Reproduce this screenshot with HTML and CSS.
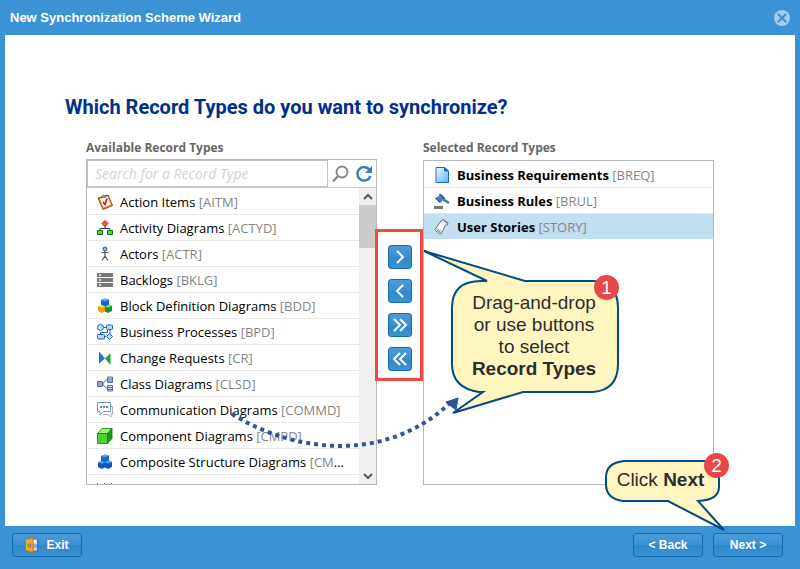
FILE: index.html
```html
<!DOCTYPE html>
<html lang="en">
  <head>
    <meta charset="UTF-8" />
    <meta name="viewport" content="width=device-width, initial-scale=1.0" />
    <title>New Synchronization Scheme Wizard</title>
    <link rel="stylesheet" href="styles.css">
  </head>
  <body>
    <div class="window">
      <header class="titlebar">
        <h1>New Synchronization Scheme Wizard</h1>
        <button class="close" aria-label="Close">
          <svg width="16" height="16" viewBox="0 0 16 16">
            <circle cx="8" cy="8" r="8" fill="#a3cbeb" />
            <path d="M4.5 4.5l7 7M11.5 4.5l-7 7" stroke="#3b92d4" stroke-width="2.2" stroke-linecap="round" />
          </svg>
        </button>
      </header>

      <main class="content">
        <h2>Which Record Types do you want to synchronize?</h2>
        <div class="picker">
          <section class="column">
            <h3>Available Record Types</h3>
            <div class="box">
              <div class="search">
                <input type="text" id="search" aria-label="Search for a Record Type" placeholder="Search for a Record Type" />
                <button class="tool" aria-label="Search">
                  <svg width="18" height="18" viewBox="0 0 18 18" fill="none" stroke="#858585">
                    <circle cx="11" cy="7" r="5.5" stroke-width="1.8" />
                    <path d="M7 11l-5 5.5" stroke-width="2.2" />
                  </svg>
                </button>
                <button class="tool" aria-label="Refresh">
                  <svg width="18" height="18" viewBox="0 0 18 18">
                    <path d="M15 5.5A6.7 6.7 0 1 0 15.5 11" fill="none" stroke="#3c7ab8" stroke-width="2.5" />
                    <path d="M17 1v7h-7z" fill="#3c7ab8" />
                  </svg>
                </button>
              </div>
              <div class="scroll">
                <ul class="list">
                  <li>
                    <svg class="icon" viewBox="0 0 16 16">
                      <path d="M1 4l10-3 4.5 10.5L6 15.5z" fill="#e88b1c" stroke="#8d4b12" />
                      <path d="M3 5l7.5-2.5 3.3 8L6.5 13.5z" fill="#fff" />
                      <path d="M4 3.5L6 1l3 1-.5 1.500z" fill="#aaa" stroke="#555" stroke-width=".6" />
                      <path d="M6 8l2 2.5L10 4.5" fill="none" stroke="#d4151c" stroke-width="1.7" />
                    </svg>
                    Action Items <span>[AITM]</span>
                  </li>
                  <li>
                    <svg class="icon" viewBox="0 0 16 16">
                      <path d="M8 5v4M3 11V8.5h10V11" fill="none" stroke="#2c3e63" />
                      <path d="M8 .5L11 3.5 8 6.5 5 3.5z" fill="#ff5a45" stroke="#c30d0d" />
                      <path d="M.5 10.5h5v4h-5zM10.5 10.5h5v4h-5z" fill="#4ede4b" stroke="#106d16" />
                    </svg>
                    Activity Diagrams <span>[ACTYD]</span>
                  </li>
                  <li>
                    <svg class="icon" viewBox="0 0 16 16" fill="none" stroke="#555">
                      <path d="M4.5 6.5h7M8 5v5l-3 4.5M8 10l3 4.5" stroke-width="1.2" />
                      <circle cx="8" cy="3" r="2" fill="#8bbcf0" stroke="#2f568c" />
                    </svg>
                    Actors <span>[ACTR]</span>
                  </li>
                  <li>
                    <svg class="icon" viewBox="0 0 16 16">
                      <path d="M0 1h16v4H0zM0 6h16v4H0zM0 11h16v4H0z" fill="#777" />
                      <path d="M2 3h2M2 8h2M2 13h2" stroke="#fff" stroke-width="1.5" />
                    </svg>
                    Backlogs <span>[BKLG]</span>
                  </li>
                  <li>
                    <svg class="icon" viewBox="0 0 16 16">
                      <path d="M4 2l4-1.5 4 1v5.500l-4 2-4-2z" fill="#1b68c9" />
                      <path d="M4 2l4-1.5 4 1-4 1.5z" fill="#65b5fa" />
                      <path d="M1 8.5l3-1.500 4 1.500v5l-3 1.500-4-2z" fill="#e4a400" />
                      <path d="M1 8.5l3-1.500 4 1.500-3 1z" fill="#ffe653" />
                      <path d="M8 8.5l4-2 3 1.500v5l-4 2-3-1.500z" fill="#179126" />
                      <path d="M8 8.5l4-2 3 1.500-4 1.500z" fill="#74e66b" />
                    </svg>
                    Block Definition Diagrams <span>[BDD]</span>
                  </li>
                  <li>
                    <svg class="icon" viewBox="0 0 16 16" fill="#b9dcfa" stroke="#1d63b8">
                      <path d="M6 3.5h4M13 5v5M7 12.5h2M3.5 10V8.5h7V6" fill="none" />
                      <circle cx="3.5" cy="3.5" r="3" />
                      <rect x="9.5" y="1" width="6" height="4.5" rx="1" />
                      <rect x=".5" y="10.5" width="7" height="4.5" rx="1" />
                      <path d="M12.5 9.5l3 3-3 3-3-3z" />
                    </svg>
                    Business Processes <span>[BPD]</span>
                  </li>
                  <li>
                    <svg class="icon" viewBox="0 0 16 16">
                      <path d="M2 1.5l6 7-6 5z" fill="#1673ce" />
                      <path d="M13.5 3v12L8 8.5z" fill="#1fa536" />
                    </svg>
                    Change Requests <span>[CR]</span>
                  </li>
                  <li>
                    <svg class="icon" viewBox="0 0 16 16" fill="#d5e2f3" stroke="#526f9f">
                      <path d="M5 8l5.5-5M5 8l5.5 5M5 8h2" fill="none" />
                      <path d="M.5 5.5h5v5h-5zM10.5 1h5v5.5h-5zM10.5 9.5h5V15h-5z" />
                      <path d="M1 7h4M11 3h4M11 5h4M11 11.5h4M11 13.5h4M1 9h4" />
                    </svg>
                    Class Diagrams <span>[CLSD]</span>
                  </li>
                  <li>
                    <svg class="icon" viewBox="0 0 16 16" fill="#fff">
                      <path d="M14 4.5h1.500v8H14v2.500l-3-2.500H6" stroke="#a5acb5" />
                      <path d="M.5.5h13v9H6.5L3 13V9.5H.5z" stroke="#6b9bc9" />
                      <path d="M3 5h2M6 5h2M9 5h2" stroke="#1f67aa" stroke-width="1.5" />
                    </svg>
                    Communication Diagrams <span>[COMMD]</span>
                  </li>
                  <li>
                    <svg class="icon" viewBox="0 0 16 16" stroke="#187b13" stroke-width=".8">
                      <path d="M.5 5.5h10v10H.5z" fill="#4fd036" />
                      <path d="M.5 5.5l4.500-5h10l-4.500 5z" fill="#9bf17c" />
                      <path d="M10.5 5.5l4.500-5v10l-4.500 5z" fill="#219a19" />
                    </svg>
                    Component Diagrams <span>[CMPD]</span>
                  </li>
                  <li>
                    <svg class="icon" viewBox="0 0 16 16">
                      <path d="M4 2l4-1.5 4 1v5.500l-4 2-4-2z" fill="#1d68cd" />
                      <path d="M1 8.5l3-1.500 4 1.500v5l-3 1.500-4-2zM8 8.5l4-2 3 1.500v5l-4 2-3-1.500z" fill="#0c56bb" />
                      <path d="M4 2l4-1.5 4 1-4 1.5zM1 8.5l3-1.500 4 1.500-3 1zM8 8.5l4-2 3 1.500-4 1.500z" fill="#58aaf7" />
                    </svg>
                    Composite Structure Diagrams <span>[CMSD]</span>
                  </li>
                  <li>
                    <svg class="icon" viewBox="0 0 16 16">
                      <path d="M0 3.5h1M7 3.5h1M14 3.5h1" stroke="#2c5f73" />
                    </svg>
                  </li>
                </ul>
                <div class="scrollbar">
                  <button aria-label="Scroll up">
                    <svg width="10" height="8" viewBox="0 0 10 8"><path d="M1 6l4-4 4 4" fill="none" stroke="#555" stroke-width="2" /></svg>
                  </button>
                  <div class="thumb"></div>
                  <button aria-label="Scroll down">
                    <svg width="10" height="8" viewBox="0 0 10 8"><path d="M1 2l4 4 4-4" fill="none" stroke="#555" stroke-width="2" /></svg>
                  </button>
                </div>
              </div>
            </div>
          </section>

          <div class="transfer">
            <button class="btn move" aria-label="Add"><svg viewBox="0 0 24 24"><path d="M9 6l6 6-6 6" /></svg></button>
            <button class="btn move" aria-label="Remove"><svg viewBox="0 0 24 24"><path d="M15 6l-6 6 6 6" /></svg></button>
            <button class="btn move" aria-label="Add all"><svg viewBox="0 0 24 24"><path d="M6 6l6 6-6 6M12 6l6 6-6 6" /></svg></button>
            <button class="btn move" aria-label="Remove all"><svg viewBox="0 0 24 24"><path d="M12 6l-6 6 6 6M18 6l-6 6 6 6" /></svg></button>
            <div class="frame"></div>
            <svg class="drag-path" viewBox="0 0 232 56">
              <path d="M2 17C70 59 160 64 221 5" fill="none" stroke="#2f5597" stroke-width="4" stroke-dasharray="4 4" />
              <path d="M228 1l-12 4 10 8z" fill="#2f5597" stroke="#2f5597" />
            </svg>
            <div class="callout drag">
              <svg viewBox="0 0 200 168">
                <path d="M64 31L1 1 102 31H171Q195 33 195 58V114Q195 140 170 142H100L30 163 60 142H56Q29 138 29 114V58Q29 31 58 31z" />
              </svg>
              <p>Drag-and-drop<br />or use buttons<br />to select<br /><b>Record Types</b></p>
              <span class="badge">1</span>
            </div>
          </div>

          <section class="column">
            <h3>Selected Record Types</h3>
            <div class="box chosen">
              <ul class="list">
                <li>
                  <svg class="icon" viewBox="0 0 16 16">
                    <defs>
                      <linearGradient id="page" x1="0" y1="0" x2="1" y2="1">
                        <stop offset="0" stop-color="#f2fbff" />
                        <stop offset="1" stop-color="#5db2f8" />
                      </linearGradient>
                    </defs>
                    <path d="M2 .5h8.500L14.500 4v11.500H2z" fill="url(#page)" stroke="#1769d2" />
                    <path d="M10.500.5V4h4z" fill="#1d63c4" stroke="#1769d2" />
                  </svg>
                  <b>Business Requirements</b> <span>[BREQ]</span>
                </li>
                <li>
                  <svg class="icon" viewBox="0 0 16 16">
                    <path d="M7 5l8 5" stroke="#3c74b3" stroke-width="2.4" />
                    <path d="M2 5l5-4 4 4-5 5z" fill="#4a7fba" />
                    <path d="M5.500 1L11 6M1.500 5l5 4.500" stroke="#315f93" stroke-width="1.5" />
                    <path d="M0 13h9v3H0z" fill="#777" />
                  </svg>
                  <b>Business Rules</b> <span>[BRUL]</span>
                </li>
                <li class="active">
                  <svg class="icon" viewBox="0 0 16 16" fill="#f4f4f7" stroke="#656775" stroke-width=".9">
                    <path d="M7 2l5 3-4 8-6-4z" />
                    <path d="M7 2q2-2 3-1l4 3q0 3-2 2M2 9q-2 2 0 3l4 3q2 0 2-2" />
                    <path d="M9.500 1.500l4 3M3 11l3.500 2.500" />
                  </svg>
                  <b>User Stories</b> <span>[STORY]</span>
                </li>
              </ul>
            </div>
          </section>
        </div>
      </main>

      <footer class="footer">
        <button class="btn">
          <svg width="14" height="16" viewBox="0 0 14 16">
            <path d="M7 2h5.500v12H7z" fill="#c9d9f5" stroke="#a95d16" />
            <path d="M8 3h3v3H8z" fill="#fff" />
            <path d="M8 7h4v4H8z" fill="#91afe6" />
            <path d="M.5 2.500L8 .5v15l-7.500-2z" fill="#e9ae2d" stroke="#b97817" />
            <circle cx="4.500" cy="8.500" r="1.500" fill="#c0bda5" stroke="#77684a" />
          </svg>
          Exit
        </button>
        <div class="nav">
          <button class="btn">&lt; Back</button>
          <button class="btn">Next &gt;</button>
          <div class="callout next">
            <svg viewBox="0 0 124 72">
              <path d="M19 1H99Q114 2 114 17V27Q114 40 93 41L119 70 63 41H18Q1 39 1 24V17Q1 3 19 1z" />
            </svg>
            <p>Click <b>Next</b></p>
            <span class="badge">2</span>
          </div>
        </div>
      </footer>
    </div>
  </body>
</html>
```

FILE: styles.css
```css
* {
  box-sizing: border-box;
}

body {
  margin: 0;
  font-family: "Open Sans", sans-serif;
  font-size: 13px;
  color: #000;
}

h1, h2, h3, p, ul {
  margin: 0;
  padding: 0;
}

button {
  padding: 0;
  border: none;
  background: none;
  cursor: pointer;
}

.window {
  display: flex;
  flex-direction: column;
  height: 100vh;
  min-height: 480px;
  background: #3b92d4;
}

.titlebar {
  display: flex;
  justify-content: space-between;
  align-items: center;
  height: 35px;
  padding: 0 10px;
}

.titlebar h1 {
  font: bold 13px "Liberation Sans", Arial, sans-serif;
  color: #fff;
}

.close svg {
  display: block;
}

.content {
  flex: 1;
  display: flex;
  flex-direction: column;
  min-height: 0;
  margin: 0 5px;
  padding: 60px 81px 41px 60px;
  background: #fff;
}

.content h2 {
  font: bold 20px/24px Roboto, sans-serif;
  color: #002f8e;
}

.picker {
  flex: 1;
  display: grid;
  grid-template-columns: 1fr 46px 1fr;
  grid-template-rows: minmax(0, 1fr);
  min-height: 0;
  margin: 19px 0 0 21px;
}

.column {
  display: flex;
  flex-direction: column;
  min-width: 0;
}

.column h3 {
  height: 21px;
  font-size: 12px;
  line-height: 20px;
  color: #666;
}

.box {
  flex: 1;
  display: flex;
  flex-direction: column;
  min-height: 0;
  border: 1px solid #b8b8b8;
}

.chosen {
  margin-top: 1px;
}

.search {
  display: flex;
  align-items: center;
  height: 28px;
  border-bottom: 1px solid #ccc;
}

.search input {
  flex: 1;
  min-width: 0;
  height: 27px;
  padding: 0 7px;
  border: 1px solid #c4c4c4;
  font: 14px "Open Sans", sans-serif;
}

.search input::placeholder {
  font-style: italic;
  color: #d2d2d2;
}

.tool {
  width: 24px;
  height: 24px;
}

.tool svg {
  display: block;
  margin: auto;
}

.scroll {
  flex: 1;
  display: flex;
  min-height: 0;
}

.list {
  flex: 1;
  min-width: 0;
  overflow: hidden;
  list-style: none;
}

.list li {
  height: 26px;
  padding: 0 14px 0 33px;
  border-top: 1px solid #e8e8e8;
  line-height: 26px;
  white-space: nowrap;
  overflow: hidden;
  text-overflow: ellipsis;
}

.list li:first-child {
  border-top-color: #fff;
}

.list span {
  color: #858585;
}

.icon {
  float: left;
  width: 16px;
  height: 16px;
  margin: 5px 0 0 -23px;
}

.list .active {
  border-color: #d9eaf7;
  background: #c3ddf1;
}

.scrollbar {
  display: flex;
  flex-direction: column;
  width: 17px;
  background: #f0f0f0;
}

.scrollbar button {
  height: 17px;
}

.scrollbar button:last-child {
  margin-top: auto;
}

.scrollbar svg {
  display: block;
  margin: auto;
}

.thumb {
  height: 43px;
  background: #cbcbcb;
}

.transfer {
  position: relative;
  display: flex;
  flex-direction: column;
  align-items: center;
  gap: 10px;
  padding-top: 107px;
}

.btn {
  display: flex;
  justify-content: center;
  align-items: center;
  gap: 7px;
  width: 70px;
  height: 24px;
  border: 1px solid #166dad;
  border-radius: 3px;
  background: linear-gradient(#4b9bdb, #3b90d2 50%, #3188c9 51%, #3a92d4);
  font: bold 12px "Liberation Sans", Arial, sans-serif;
  color: #fff;
}

.move {
  width: 24px;
}

.move svg {
  flex: none;
  width: 24px;
  height: 24px;
  fill: none;
  stroke: #fff;
  stroke-width: 2;
}

/* notes drawn over the wizard */
.frame {
  position: absolute;
  top: 91px;
  left: -2px;
  right: 0;
  height: 152px;
  border: 3px solid #ed4b46;
  pointer-events: none;
}

.drag-path {
  position: absolute;
  top: 259px;
  left: -147px;
  width: 232px;
  height: 56px;
  pointer-events: none;
}

.callout {
  position: absolute;
  z-index: 1;
  pointer-events: none;
  font: 19px/22px "Liberation Sans", Arial, sans-serif;
  color: #2d2d2d;
  text-align: center;
}

.callout svg {
  display: block;
  width: 100%;
  fill: #fff6bf;
  stroke: #004b87;
  stroke-width: 2;
}

.callout p {
  position: absolute;
  white-space: nowrap;
}

.badge {
  position: absolute;
  width: 25px;
  height: 25px;
  border-radius: 50%;
  background: #e94849;
  line-height: 25px;
  color: #fff;
}

.drag {
  top: 112px;
  left: 46px;
  width: 200px;
}

.drag p {
  top: 42px;
  left: 28px;
  width: 166px;
}

.drag .badge {
  top: 25px;
  left: 171px;
}

.footer {
  display: flex;
  justify-content: space-between;
  height: 43px;
  padding: 7px 17px 0 12px;
}

.nav {
  position: relative;
  display: flex;
  gap: 10px;
}

.next {
  top: -73px;
  left: -28px;
  width: 124px;
}

.next p {
  top: 9px;
  left: 0;
  width: 111px;
}

.next .badge {
  top: -7px;
  left: 99px;
}
```
